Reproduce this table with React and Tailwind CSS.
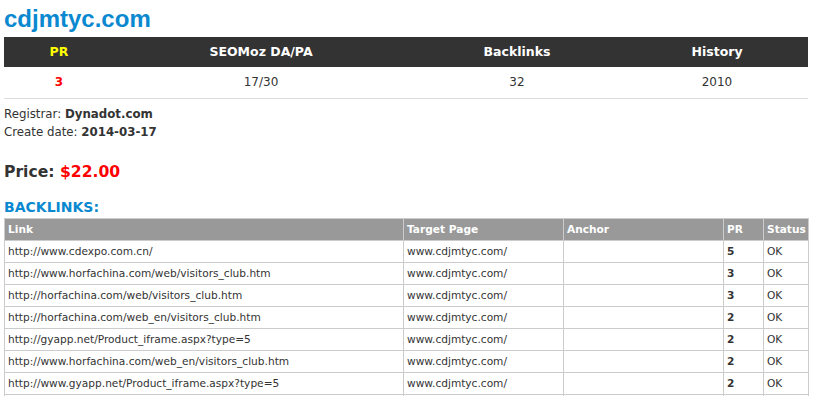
const summary = [
  { label: 'PR', value: '3', w: 'w-[110px]', head: 'text-[#ffff00]', val: 'text-[#ff0000] font-bold' },
  { label: 'SEOMoz DA/PA', value: '17/30', w: 'w-[294px]', head: 'text-white', val: 'text-[#333]' },
  { label: 'Backlinks', value: '32', w: 'w-[218px]', head: 'text-white', val: 'text-[#333]' },
  { label: 'History', value: '2010', w: 'w-[182px]', head: 'text-white', val: 'text-[#333]' },
];

const backlinks = [
  ['http://www.cdexpo.com.cn/', '5'],
  ['http://www.horfachina.com/web/visitors_club.htm', '3'],
  ['http://horfachina.com/web/visitors_club.htm', '3'],
  ['http://horfachina.com/web_en/visitors_club.htm', '2'],
  ['http://gyapp.net/Product_iframe.aspx?type=5', '2'],
  ['http://www.horfachina.com/web_en/visitors_club.htm', '2'],
  ['http://www.gyapp.net/Product_iframe.aspx?type=5', '2'],
  ['http://www.gyapp.net/', '2'],
];

const App = () => {
  return (
    <div className="bg-white px-[4px] pt-[4px] text-[#333] font-['DejaVu_Sans',sans-serif] overflow-hidden h-[396px]">
      {/* Domain title */}
      <h1 className="font-['Liberation_Sans',Arial,sans-serif] font-bold text-[24px] leading-[29px] text-[#0a88d0]">
        cdjmtyc.com
      </h1>

      {/* Summary table */}
      <table className="w-[804px] mt-[4px] border-collapse table-fixed">
        <thead>
          <tr className="bg-[#333333] h-[30px] text-[12.5px]">
            {summary.map((s) => (
              <th key={s.label} className={`${s.w} ${s.head} font-bold text-center p-0`}>
                {s.label}
              </th>
            ))}
          </tr>
        </thead>
        <tbody>
          <tr className="h-[31px] border-b border-[#dddddd] text-[12px]">
            {summary.map((s) => (
              <td key={s.label} className={`${s.val} text-center p-0`}>
                {s.value}
              </td>
            ))}
          </tr>
        </tbody>
      </table>

      {/* Domain info */}
      <div className="mt-[6px] text-[11.8px] leading-[18px]">
        <p>Registrar: <b>Dynadot.com</b></p>
        <p>Create date: <b>2014-03-17</b></p>
      </div>

      <p className="mt-[20px] text-[15.6px] leading-[22px] font-bold">
        Price: <span className="text-[#ff0000]">$22.00</span>
      </p>

      <h2 className="mt-[16px] text-[14px] leading-[16px] font-bold text-[#0a88d0]">BACKLINKS:</h2>

      {/* Backlinks table */}
      <table className="w-[804px] mt-[3px] border-collapse table-fixed text-[10.6px] leading-[14px]">
        <colgroup>
          <col className="w-[399px]" />
          <col className="w-[160px]" />
          <col className="w-[160px]" />
          <col className="w-[40px]" />
          <col className="w-[45px]" />
        </colgroup>
        <thead>
          <tr className="bg-[#999999] text-white h-[22px]">
            <th className="text-left font-bold px-[3px] border border-[#cccccc]">Link</th>
            <th className="text-left font-bold px-[3px] border border-[#cccccc]">Target Page</th>
            <th className="text-left font-bold px-[3px] border border-[#cccccc]">Anchor</th>
            <th className="text-left font-bold px-[3px] border border-[#cccccc]">PR</th>
            <th className="text-left font-bold px-[3px] border border-[#cccccc]">Status</th>
          </tr>
        </thead>
        <tbody>
          {backlinks.map(([link, pr], i) => (
            <tr key={i} className="h-[22px]">
              <td className="px-[3px] border border-[#cccccc]">{link}</td>
              <td className="px-[3px] border border-[#cccccc]">www.cdjmtyc.com/</td>
              <td className="px-[3px] border border-[#cccccc]"></td>
              <td className="px-[3px] border border-[#cccccc] font-bold">{pr}</td>
              <td className="px-[3px] border border-[#cccccc]">OK</td>
            </tr>
          ))}
        </tbody>
      </table>
    </div>
  );
};

export default App;
